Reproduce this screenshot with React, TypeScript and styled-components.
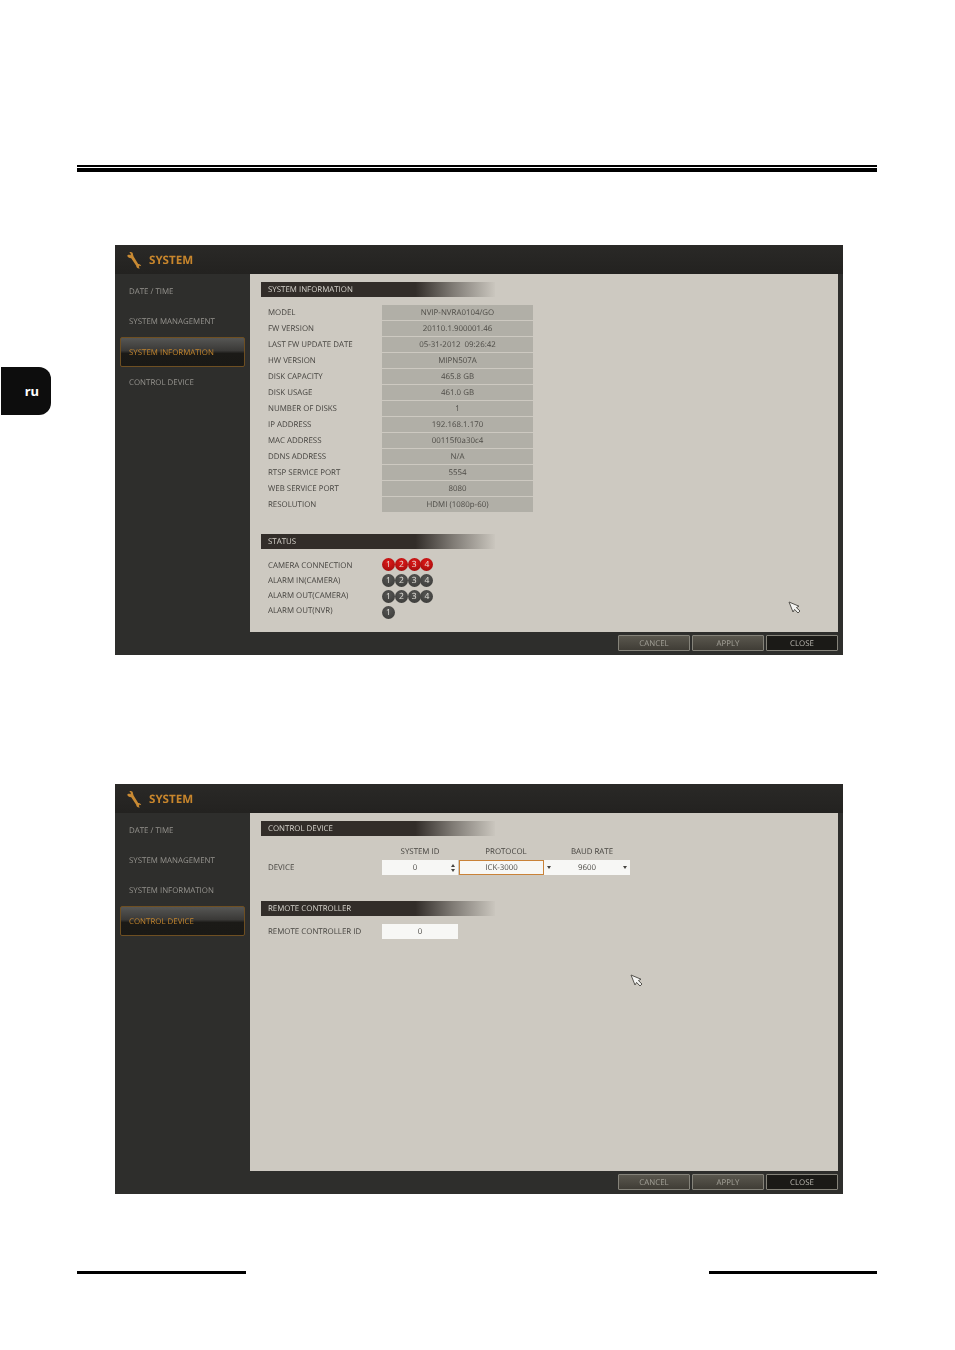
import React from 'react';
import styled, { createGlobalStyle } from 'styled-components';

const GlobalStyle = createGlobalStyle`
  html, body {
    margin: 0;
    padding: 0;
    background: #fff;
    font-family: "Open Sans", "Liberation Sans", sans-serif;
  }
`;

const MENU = ['DATE / TIME', 'SYSTEM MANAGEMENT', 'SYSTEM INFORMATION', 'CONTROL DEVICE'];

const INFO_ROWS = [
  ['MODEL', 'NVIP-NVRA0104/GO'],
  ['FW VERSION', '20110.1.900001.46'],
  ['LAST FW UPDATE DATE', '05-31-2012  09:26:42'],
  ['HW VERSION', 'MIPN507A'],
  ['DISK CAPACITY', '465.8 GB'],
  ['DISK USAGE', '461.0 GB'],
  ['NUMBER OF DISKS', '1'],
  ['IP ADDRESS', '192.168.1.170'],
  ['MAC ADDRESS', '00115f0a30c4'],
  ['DDNS ADDRESS', 'N/A'],
  ['RTSP SERVICE PORT', '5554'],
  ['WEB SERVICE PORT', '8080'],
  ['RESOLUTION', 'HDMI (1080p-60)'],
];

const STATUS_ROWS = [
  { label: 'CAMERA CONNECTION', count: 4, on: true },
  { label: 'ALARM IN(CAMERA)', count: 4, on: false },
  { label: 'ALARM OUT(CAMERA)', count: 4, on: false },
  { label: 'ALARM OUT(NVR)', count: 1, on: false },
];

function WrenchIcon() {
  return (
    <svg width="16" height="18" viewBox="0 0 16 18">
      <path
        d="M1.2 4.6 L3 3.4 L4.2 4.2 L5 3 L3.4 1.4 C5.2 0.6 6.8 1.4 7 3.4 L7.6 5.6 L12.2 13 C13.8 12.8 15 13.8 15.2 15.2 L13.6 14.6 L12.8 16 L13.8 17.4 C11.8 17.8 10.2 16.6 10.2 14.8 L5.2 7.2 C3.2 7.2 1.6 6.4 1.2 4.6 Z"
        fill="#c98a33"
      />
    </svg>
  );
}

function Cursor() {
  return (
    <svg width="13" height="13" viewBox="0 0 13 13">
      <path
        d="M1 1 L11 5.2 L8.4 6.6 L12 10 L10 12 L6.6 8.4 L5 11 Z"
        fill="#f4f4f2"
        stroke="#55534e"
        strokeWidth="1"
        strokeLinejoin="round"
      />
    </svg>
  );
}

function Shell({ active, cursor, children }: { active: number; cursor: { x: number; y: number }; children: React.ReactNode }) {
  return (
    <Screen>
      <TitleBar>
        <WrenchIcon />
        <Title>SYSTEM</Title>
      </TitleBar>
      <Main>
        <Sidebar>
          {MENU.map((item, i) => (
            <MenuItem key={item} $active={i === active}>
              {item}
            </MenuItem>
          ))}
        </Sidebar>
        <Panel>
          {children}
          <CursorSpot style={{ left: cursor.x, top: cursor.y }}>
            <Cursor />
          </CursorSpot>
        </Panel>
      </Main>
      <ButtonBar>
        <ActionButton>CANCEL</ActionButton>
        <ActionButton>APPLY</ActionButton>
        <ActionButton $dark>CLOSE</ActionButton>
      </ButtonBar>
    </Screen>
  );
}

export default function App() {
  return (
    <Page>
      <GlobalStyle />
      <SideTab>ru</SideTab>
      <TopRule />

      <Shell active={2} cursor={{ x: 538, y: 327 }}>
        <SectionBar>SYSTEM INFORMATION</SectionBar>
        <InfoList>
          {INFO_ROWS.map(([label, value]) => (
            <InfoRow key={label}>
              <RowLabel>{label}</RowLabel>
              <InfoValue>{value}</InfoValue>
            </InfoRow>
          ))}
        </InfoList>
        <SectionBar $gap={22}>STATUS</SectionBar>
        <StatusGrid>
          <StatusLabels>
            {STATUS_ROWS.map(row => (
              <StatusLabel key={row.label}>{row.label}</StatusLabel>
            ))}
          </StatusLabels>
          <StatusBadges>
            {STATUS_ROWS.map(row => (
              <BadgeRow key={row.label}>
                {Array.from({ length: row.count }, (_, i) => (
                  <Badge key={i} $on={row.on}>
                    {i + 1}
                  </Badge>
                ))}
              </BadgeRow>
            ))}
          </StatusBadges>
        </StatusGrid>
      </Shell>

      <SecondShell>
        <Shell active={3} cursor={{ x: 380, y: 161 }}>
          <SectionBar>CONTROL DEVICE</SectionBar>
          <DeviceGrid>
            <span />
            <ColumnHead>SYSTEM ID</ColumnHead>
            <ColumnHead>PROTOCOL</ColumnHead>
            <ColumnHead>BAUD RATE</ColumnHead>
            <RowLabel>DEVICE</RowLabel>
            <Field>
              <FieldValue>0</FieldValue>
              <Spinner>
                <ArrowUp />
                <ArrowDown />
              </Spinner>
            </Field>
            <Field>
              <FocusValue>ICK-3000</FocusValue>
              <ArrowSlot>
                <ArrowDown />
              </ArrowSlot>
            </Field>
            <Field>
              <FieldValue>9600</FieldValue>
              <ArrowSlot>
                <ArrowDown />
              </ArrowSlot>
            </Field>
          </DeviceGrid>
          <SectionBar $gap={26}>REMOTE CONTROLLER</SectionBar>
          <RemoteRow>
            <RowLabel>REMOTE CONTROLLER ID</RowLabel>
            <Field>
              <FieldValue>0</FieldValue>
            </Field>
          </RemoteRow>
        </Shell>
      </SecondShell>

      <BottomRule>
        <RuleSegment $width={169} />
        <RuleSegment $width={168} />
      </BottomRule>
    </Page>
  );
}

const Page = styled.div`
  position: relative;
  width: 955px;
  height: 1350px;
  padding-top: 165px;
  box-sizing: border-box;
  overflow: hidden;
  background: #fff;
`;

const SideTab = styled.div`
  position: absolute;
  left: 1px;
  top: 367px;
  width: 50px;
  height: 48px;
  box-sizing: border-box;
  padding-right: 12px;
  display: flex;
  align-items: center;
  justify-content: flex-end;
  background: #0d0d0d;
  border-radius: 0 12px 12px 0;
  color: #fff;
  font-family: "Noto Sans", "Liberation Sans", sans-serif;
  font-size: 13px;
  font-weight: 700;
`;

const TopRule = styled.div`
  width: 800px;
  height: 7px;
  margin: 0 0 73px 77px;
  box-sizing: border-box;
  border-top: 2px solid #000;
  border-bottom: 4px solid #000;
`;

const Screen = styled.section`
  width: 728px;
  height: 410px;
  margin-left: 115px;
  display: flex;
  flex-direction: column;
  background: #2e2e2c;
  font-size: 7.9px;
  text-rendering: geometricPrecision;
  filter: blur(0.3px);
`;

const SecondShell = styled.div`
  margin-top: 129px;
`;

const TitleBar = styled.header`
  height: 29px;
  flex: none;
  display: flex;
  align-items: center;
  gap: 7px;
  padding-left: 11px;
  background: linear-gradient(#2a2927, #232220);
`;

const Title = styled.h1`
  margin: 1px 0 0;
  color: #c8862c;
  font-size: 11.6px;
  font-weight: 700;
`;

const Main = styled.div`
  display: flex;
  height: 358px;
  flex: none;
`;

const Sidebar = styled.nav`
  width: 135px;
  flex: none;
  padding-top: 2px;
  box-sizing: border-box;
`;

const MenuItem = styled.div<{ $active?: boolean }>`
  width: 125px;
  height: 30px;
  margin: ${p => (p.$active ? '1px' : '0')} 0 0 5px;
  padding: 2px 0 0 ${p => (p.$active ? '8px' : '9px')};
  box-sizing: border-box;
  display: flex;
  align-items: center;
  color: ${p => (p.$active ? '#c4862e' : '#96948f')};
  border: ${p => (p.$active ? '1px solid #6e4f22' : 'none')};
  border-radius: 2px;
  background: ${p =>
    p.$active ? 'linear-gradient(#565654 0%, #3a3937 45%, #1b1a17 55%, #1a1916 100%)' : 'none'};
`;

const Panel = styled.main`
  position: relative;
  width: 588px;
  flex: none;
  padding: 8px 0 0 11px;
  box-sizing: border-box;
  background: #cdc9c1;
`;

const SectionBar = styled.h2<{ $gap?: number }>`
  width: 234px;
  height: 15px;
  margin: ${p => p.$gap ?? 0}px 0 0;
  padding-left: 7px;
  box-sizing: border-box;
  display: flex;
  align-items: center;
  color: #d9d6cf;
  font-size: inherit;
  font-weight: 400;
  background: linear-gradient(
    90deg,
    #322d29 0%,
    #322d29 66%,
    rgba(50, 45, 41, 0.5) 82%,
    rgba(50, 45, 41, 0.02) 100%
  );
`;

const InfoList = styled.div`
  display: flex;
  flex-direction: column;
  gap: 1px;
  margin-top: 8px;
  padding-left: 7px;
`;

const InfoRow = styled.div`
  display: flex;
  align-items: center;
  height: 15px;
`;

const RowLabel = styled.span`
  width: 114px;
  height: 15px;
  flex: none;
  display: flex;
  align-items: center;
  color: #45433f;
`;

const InfoValue = styled.span`
  width: 151px;
  height: 15px;
  display: flex;
  align-items: center;
  justify-content: center;
  background: #b1afa7;
  color: #4e4c47;
  white-space: pre;
`;

const StatusGrid = styled.div`
  display: flex;
  padding: 8px 0 0 7px;
`;

const StatusLabels = styled.div`
  width: 114px;
  flex: none;
`;

const StatusLabel = styled.div`
  height: 15px;
  padding-top: 2px;
  box-sizing: border-box;
  display: flex;
  align-items: center;
  color: #45433f;
`;

const StatusBadges = styled.div`
  display: flex;
  flex-direction: column;
  gap: 3px;
  padding-top: 1px;
`;

const BadgeRow = styled.div`
  display: flex;
  height: 13px;
`;

const Badge = styled.span<{ $on?: boolean }>`
  width: 13px;
  height: 13px;
  margin-right: -0.2px;
  flex: none;
  border-radius: 50%;
  display: flex;
  align-items: center;
  justify-content: center;
  color: #e4e2dc;
  font-size: 8.5px;
  background: ${p =>
    p.$on
      ? 'radial-gradient(circle at 50% 35%, #e01a1a, #a90d0d 75%)'
      : 'radial-gradient(circle at 50% 35%, #565654, #3f3f3d 75%)'};
`;

const CursorSpot = styled.div`
  position: absolute;
  display: flex;
  width: 13px;
  height: 13px;
`;

const ButtonBar = styled.footer`
  height: 23px;
  flex: none;
  display: flex;
  justify-content: flex-end;
  align-items: flex-start;
  gap: 2px;
  padding: 3px 5px 0 0;
  box-sizing: border-box;
`;

const ActionButton = styled.button<{ $dark?: boolean }>`
  width: 72px;
  height: 16px;
  padding: 2px 0 0;
  box-sizing: border-box;
  border: 1px solid #85837a;
  border-radius: 1px;
  color: ${p => (p.$dark ? '#bdbbb4' : '#a3a198')};
  font-family: inherit;
  font-size: inherit;
  text-rendering: inherit;
  background: ${p => (p.$dark ? '#1b1a17' : 'linear-gradient(#5a574e, #403d36)')};
`;

const DeviceGrid = styled.div`
  display: grid;
  grid-template-columns: 114px 76px 96px 76px;
  grid-template-rows: 15px 15px;
  align-items: center;
  margin-top: 9px;
  padding-left: 7px;
`;

const ColumnHead = styled.span`
  height: 15px;
  padding-bottom: 2px;
  box-sizing: border-box;
  display: flex;
  align-items: center;
  justify-content: center;
  color: #45433f;
`;

const Field = styled.div`
  display: flex;
  align-items: stretch;
  height: 15px;
  width: 76px;
  background: #f7f7f5;
  color: #4e4c47;

  & + & {
    width: 95px;
    margin-left: 1px;
  }

  & + & + & {
    width: 76px;
    margin-left: 0;
  }
`;

const FieldValue = styled.span`
  flex: 1;
  box-sizing: border-box;
  display: flex;
  align-items: center;
  justify-content: center;
`;

const FocusValue = styled(FieldValue)`
  border: 1px solid #c98238;
`;

const Spinner = styled.span`
  width: 10px;
  flex: none;
  display: flex;
  flex-direction: column;
  align-items: center;
  justify-content: center;
  gap: 2px;
`;

const ArrowSlot = styled.span`
  width: 10px;
  flex: none;
  display: flex;
  align-items: center;
  justify-content: center;
`;

const ArrowDown = styled.i`
  width: 0;
  height: 0;
  border-left: 2.5px solid transparent;
  border-right: 2.5px solid transparent;
  border-top: 3px solid #45433f;
`;

const ArrowUp = styled.i`
  width: 0;
  height: 0;
  border-left: 2.5px solid transparent;
  border-right: 2.5px solid transparent;
  border-bottom: 3px solid #45433f;
`;

const RemoteRow = styled.div`
  display: flex;
  align-items: center;
  margin-top: 8px;
  padding-left: 7px;
`;

const BottomRule = styled.div`
  display: flex;
  justify-content: space-between;
  width: 800px;
  margin: 77px 0 0 77px;
`;

const RuleSegment = styled.div<{ $width: number }>`
  width: ${p => p.$width}px;
  height: 3px;
  background: #000;
`;
